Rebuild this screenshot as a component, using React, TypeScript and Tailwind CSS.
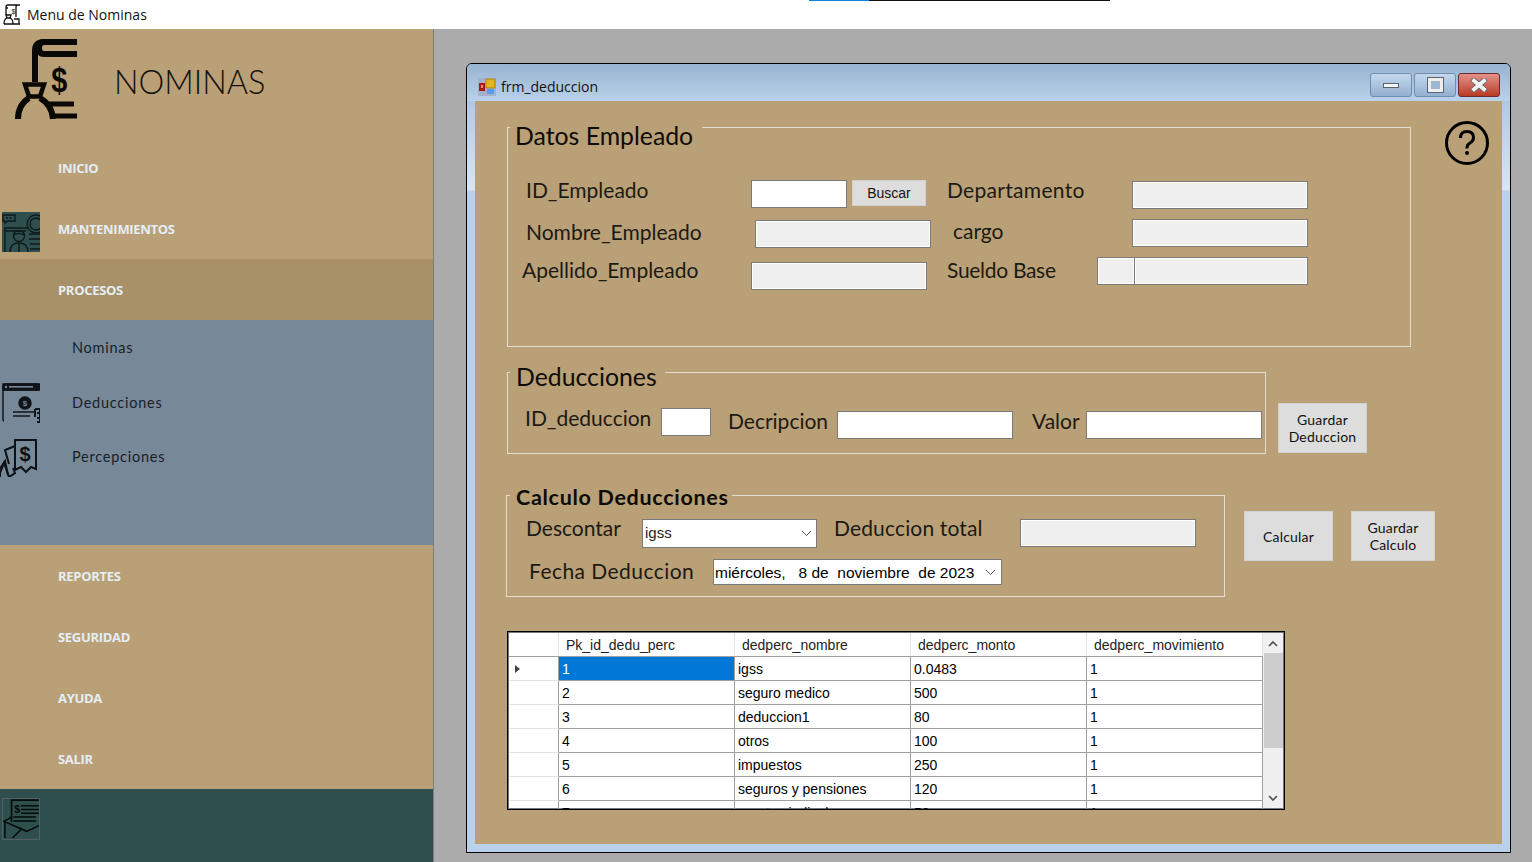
import React from "react";

const GOTHIC = "font-['Lato'] font-normal text-[#1c1a14]";

function Label({ className, children }: { className: string; children: React.ReactNode }) {
  return <div className={`${GOTHIC} shrink-0 text-[21px] leading-[22px] h-[24px] whitespace-nowrap ${className}`}>{children}</div>;
}

function Field({ className, disabled }: { className: string; disabled?: boolean }) {
  return (
    <div className={`shrink-0 h-[28px] border border-[#7a7a7a] ${disabled ? "bg-[#efefef] shadow-[inset_0_0_0_1px_#ffffff]" : "bg-white"} ${className}`} />
  );
}

function WinButton({ className, children }: { className: string; children: React.ReactNode }) {
  return (
    <button className={`shrink-0 bg-[#dddddd] border border-[#d0d0d0] text-[14px] leading-[17px] text-[#111] tracking-[0.2px] font-['Lato'] ${className}`}>
      {children}
    </button>
  );
}

function GroupTitle({ className, children }: { className: string; children: React.ReactNode }) {
  return <div className={`absolute bg-[#baa076] whitespace-nowrap text-[#0d0c08] font-['Lato'] ${className}`}>{children}</div>;
}

function Logo() {
  return (
    <svg width="90" height="95" viewBox="0 0 90 95" className="ml-0 mt-px block" fill="none" stroke="#0a0805">
      <path d="M77 12H44q-9 0-9 9V52" strokeWidth="6" />
      <path d="M44 12q-5 0-5 6t5 6H77" strokeWidth="6" />
      <path d="M25 54.5H44L40 66.5H29Z" strokeWidth="4.5" />
      <path d="M18 89q0-14 11-21M40 68q12 7 13 21" strokeWidth="6" />
      <path d="M47 74H74M52 86H77" strokeWidth="5" />
      <text x="74" y="62" textAnchor="middle" fontSize="36" fontWeight="700" fontFamily="'Liberation Sans', sans-serif" fill="#0a0805" stroke="none" transform="scale(0.8 1)">$</text>
    </svg>
  );
}

function TitleIcon() {
  return (
    <svg width="18" height="21" viewBox="0 0 18 21" fill="none" stroke="#111" strokeWidth="1.3" className="ml-[3px] -mt-[1px] shrink-0">
      <path d="M5 1H17M5 1q-2 0-2 2v8M15 1q-2 0-2 2V13M5 4H3" />
      <path d="M3 11H8L7 14H4Z" />
      <path d="M1 20q0-5 3-6M7 14q3 1 3 6M1 20H17M11 15H16V20" />
      <text x="8.5" y="10" fontSize="7" fontFamily="'Liberation Sans', sans-serif" fill="#111" stroke="none">$</text>
    </svg>
  );
}

function MantIcon() {
  return (
    <svg width="38" height="40" viewBox="0 0 38 40" className="shrink-0 bg-[#2f4f4f]" fill="none" stroke="#0d1a1a" strokeWidth="1.4">
      <path d="M1 3H13V9H6L3 11V9H1Z" />
      <path d="M4 6H10" strokeDasharray="2 1.5" />
      <circle cx="34" cy="12" r="9" />
      <circle cx="34" cy="12" r="6" />
      <path d="M3 40V16H26M3 19H24" />
      <circle cx="17" cy="24" r="5.5" />
      <path d="M12 23q5-3 10 0" />
      <path d="M8 40q0-9 9-9t9 9M17 31V40" />
      <path d="M27 22H38M27 27H38M28 32H38M28 37H38" />
    </svg>
  );
}

function DedIcon() {
  return (
    <svg width="38" height="40" viewBox="0 0 38 40" className="shrink-0 -mt-[1px]" fill="none" stroke="#10141a" strokeWidth="1.5">
      <path d="M2 38q-1 0-1-2V4q0-3 3-3H36V7H1" fill="none" />
      <rect x="1" y="1" width="37" height="6" fill="#10141a" />
      <rect x="7" y="3" width="24" height="1.6" fill="#778899" stroke="none" />
      <circle cx="4" cy="4" r="1.2" fill="#778899" stroke="none" />
      <circle cx="23" cy="20" r="6" fill="#10141a" />
      <text x="23" y="23" textAnchor="middle" fontSize="8" fontWeight="700" fontFamily="'Liberation Sans', sans-serif" fill="#778899" stroke="none">$</text>
      <path d="M11 29H32M11 33H28" strokeWidth="1.5" />
      <path d="M33 26H38V40M33 26V34" strokeWidth="2" />
      <path d="M35 30h3M35 35h3M35 39h3" strokeWidth="2" />
    </svg>
  );
}

function PercIcon() {
  return (
    <svg width="38" height="40" viewBox="0 0 38 40" fill="none" stroke="#0d1014" strokeWidth="2" className="shrink-0">
      <path d="M15 3H36V32L31 30L26 35L21 30L15 33Z" />
      <text x="25" y="24" textAnchor="middle" fontSize="20" fontWeight="700" fontFamily="'Liberation Sans', sans-serif" fill="#0d1014" stroke="none">$</text>
      <path d="M15 9L5 13L9 27M13 31L15 36L9 40L4 26L0 36V40" />
      <path d="M0 32L5 24L8 38" />
    </svg>
  );
}

function FootIcon() {
  return (
    <svg width="38" height="42" viewBox="0 0 38 42" className="shrink-0 border border-[#555f5f]" fill="none" stroke="#050a0a" strokeWidth="1.4">
      <path d="M9 24V1H38" strokeWidth="1.8" />
      <text x="12" y="15" fontSize="11" fontWeight="700" fontFamily="'Liberation Sans', sans-serif" fill="#050a0a" stroke="none">$</text>
      <path d="M19 7H38M19 11H38M19 15H38M11 19H35M11 23H35" strokeWidth="1.6" />
      <path d="M2 41V23L9 19M0 23L25 34L38 28M10 41L20 31" strokeWidth="1.6" />
    </svg>
  );
}

function HelpIcon() {
  return (
    <svg width="44" height="44" viewBox="0 0 44 44" fill="none" stroke="#000" className="shrink-0 -mt-[6px] ml-[34px]">
      <circle cx="22" cy="22" r="20.5" strokeWidth="3" />
      <path d="M15.5 17q0-6.5 6.5-6.5t6.5 6q0 3.5-3.5 5.5t-3 5.5" strokeWidth="3" />
      <circle cx="22" cy="32" r="2" fill="#000" stroke="none" />
    </svg>
  );
}

function AppIcon() {
  return (
    <svg width="18" height="18" viewBox="0 0 18 18" className="shrink-0">
      <rect x="0" y="0" width="18" height="18" fill="#9fb4cc" />
      <rect x="1" y="5" width="6" height="8" fill="#a61c10" />
      <rect x="3" y="7" width="2" height="3" fill="#f08a7a" />
      <rect x="8" y="1" width="9" height="9" fill="#e4b51c" stroke="#a77c0c" strokeWidth="0.8" />
      <rect x="9" y="11" width="7" height="5" fill="#5c9ae6" />
    </svg>
  );
}

function CtrlBtn({ className, children }: { className: string; children: React.ReactNode }) {
  return <div className={`w-[42px] h-[24px] rounded-[3px] flex items-center justify-center border shrink-0 ${className}`}>{children}</div>;
}

function NavItem({ label, icon }: { label: string; icon?: React.ReactNode }) {
  return (
    <div className="h-[61px] pt-[2px] flex items-center relative">
      <div className="w-[58px] pl-[2px] pt-[4px] shrink-0">{icon}</div>
      <span className="font-['Open_Sans'] font-bold text-[13px] tracking-[-0.3px] text-[#e4eef6]">{label}</span>
    </div>
  );
}

function SubItem({ label, icon, className }: { label: string; icon?: React.ReactNode; className: string }) {
  return (
    <div className={`flex items-center ${className}`}>
      <div className="w-[72px] shrink-0">{icon}</div>
      <span className="font-['Lato'] text-[14.5px] text-[#1b2028] tracking-[0.75px]">{label}</span>
    </div>
  );
}

const COLS = ["w-[176px]", "w-[176px]", "w-[176px]", "w-[176px]"];
const HEAD = ["Pk_id_dedu_perc", "dedperc_nombre", "dedperc_monto", "dedperc_movimiento"];
const ROWS = [
  ["1", "igss", "0.0483", "1"],
  ["2", "seguro medico", "500", "1"],
  ["3", "deduccion1", "80", "1"],
  ["4", "otros", "100", "1"],
  ["5", "impuestos", "250", "1"],
  ["6", "seguros y pensiones", "120", "1"],
  ["7", "aporte sindical", "50", "1"],
];

function Grid() {
  return (
    <div className="mt-[34px] w-[778px] h-[179px] border border-black p-px shadow-[inset_0_0_0_1px_#777777] bg-white flex overflow-hidden font-['Liberation_Sans'] text-[14px] text-black">
      <div className="w-[754px] shrink-0">
        <div className="flex h-[24px] border-b border-[#a0a0a0]">
          <div className="w-[50px] border-r border-[#e4e4e4] shrink-0" />
          {HEAD.map((h, i) => (
            <div key={h} className={`${COLS[i]} pl-[7px] leading-[25px] border-r border-[#e4e4e4] shrink-0 text-[#222]`}>{h}</div>
          ))}
        </div>
        {ROWS.map((r, ri) => (
          <div key={r[0]} className="flex h-[24px]">
            <div className="w-[50px] border-r border-b border-r-[#a0a0a0] border-b-[#e4e4e4] shrink-0 flex items-center pl-[6px]">
              {ri === 0 && <div className="w-0 h-0 border-y-[4px] border-y-transparent border-l-[5px] border-l-[#444]" />}
            </div>
            {r.map((c, i) => (
              <div
                key={i}
                className={`${COLS[i]} pl-[3px] leading-[25px] border-r border-b border-[#a0a0a0] shrink-0 whitespace-nowrap ${ri === 0 && i === 0 ? "bg-[#0078d7] text-white" : ""}`}
              >
                {c}
              </div>
            ))}
          </div>
        ))}
      </div>
      <div className="w-[20px] bg-[#f0f0f0] flex flex-col items-center shrink-0">
        <div className="h-[20px] flex items-center justify-center">
          <svg width="10" height="7" viewBox="0 0 10 7" fill="none" stroke="#555" strokeWidth="1.7"><path d="M1 6L5 2L9 6" /></svg>
        </div>
        <div className="w-[19px] h-[95px] bg-[#cdcdcd]" />
        <div className="flex-1" />
        <div className="h-[20px] flex items-center justify-center">
          <svg width="10" height="7" viewBox="0 0 10 7" fill="none" stroke="#555" strokeWidth="1.7"><path d="M1 1L5 5L9 1" /></svg>
        </div>
      </div>
    </div>
  );
}

function Caret() {
  return (
    <svg width="11" height="7" viewBox="0 0 11 7" fill="none" stroke="#555" strokeWidth="1" className="shrink-0"><path d="M1 1L5.5 5.5L10 1" /></svg>
  );
}

export default function App() {
  return (
    <div className="w-[1532px] h-[862px] overflow-hidden flex flex-col bg-[#ababab] relative">
      <div className="h-[29px] bg-white flex items-center shrink-0">
        <TitleIcon />
        <span className="ml-[6px] font-['Open_Sans'] text-[14px] text-[#111]">Menu de Nominas</span>
      </div>
      <div className="absolute top-0 left-[809px] w-[60px] h-[1px] bg-[#0a84e0]" />
      <div className="absolute top-0 left-[869px] w-[241px] h-[1px] bg-[#111]" />

      <div className="flex flex-1 min-h-0">
        <aside className="w-[434px] shrink-0 border-r border-[#7d7d7d] bg-[#baa076] flex flex-col">
          <div className="h-[108px] flex shrink-0">
            <Logo />
            <div className="ml-[24px] mt-[31px] font-['Lato'] font-light text-[32.5px] leading-[44px] text-[#12100c]">NOMINAS</div>
          </div>
          <NavItem label="INICIO" />
          <NavItem label="MANTENIMIENTOS" icon={<MantIcon />} />
          <div className="bg-[#a89068]"><NavItem label="PROCESOS" /></div>
          <div className="h-[225px] bg-[#778899] flex flex-col shrink-0">
            <SubItem label="Nominas" className="h-[56px]" />
            <SubItem label="Deducciones" className="h-[54px] pl-[2px] [&>div]:w-[70px]" icon={<DedIcon />} />
            <SubItem label="Percepciones" className="h-[54px]" icon={<PercIcon />} />
          </div>
          <NavItem label="REPORTES" />
          <NavItem label="SEGURIDAD" />
          <NavItem label="AYUDA" />
          <NavItem label="SALIR" />
          <div className="flex-1 bg-[#2f4f4f] pt-[9px] pl-[2px]"><FootIcon /></div>
        </aside>

        <main className="flex-1 pl-[32px] pt-[34px]">
          <div className="w-[1045px] h-[790px] border border-black rounded-t-[6px] bg-[linear-gradient(180deg,#b0c9e3_37px,#d8e6f4_126px,#b9d1ea_127px)] flex flex-col overflow-hidden">
            <div className="h-[37px] shrink-0 bg-gradient-to-b from-[#99b4d1] to-[#b9d1ea] flex items-center pl-[11px] pr-[10px] pt-[8px]">
              <AppIcon />
              <span className="ml-[5px] font-['Open_Sans'] text-[14px] text-[#111]">frm_deduccion</span>
              <div className="flex-1" />
              <div className="flex gap-[2px] -mt-[3px]">
                <CtrlBtn className="border-[#6f8db0] bg-gradient-to-b from-[#c3d8ee] to-[#94b0cf]">
                  <div className="w-[16px] h-[5px] bg-[#f4f4f4] border border-[#5a6470]" />
                </CtrlBtn>
                <CtrlBtn className="border-[#6f8db0] bg-gradient-to-b from-[#c3d8ee] to-[#94b0cf]">
                  <div className="w-[15px] h-[14px] bg-[#9db6d2] border-[3px] border-[#eeeeee] outline outline-1 outline-[#5a6470]" />
                </CtrlBtn>
                <CtrlBtn className="border-[#6b2a30] bg-gradient-to-b from-[#e4908a] to-[#b83a22]">
                  <svg width="18" height="14" viewBox="0 0 18 14" fill="none">
                    <path d="M2 1L16 13M16 1L2 13" stroke="#5a5a66" strokeWidth="5.5" />
                    <path d="M2.5 1.5L15.5 12.5M15.5 1.5L2.5 12.5" stroke="#f2f2f2" strokeWidth="4" />
                  </svg>
                </CtrlBtn>
              </div>
            </div>

            <div className="mx-[8px] h-[743px] bg-[#baa076] pl-[32px] pt-[26px] shrink-0">
              <div className="flex">
                <div className="relative w-[904px] h-[220px] border border-[#e4ddcf] pt-[51px] shrink-0">
                  <GroupTitle className="left-[2px] -top-[7px] w-[192px] h-[30px] pl-[5px] text-[24.8px] leading-[30px]">Datos Empleado</GroupTitle>
                  <div className="flex h-[40px] pl-[18px]">
                    <Label className="w-[225px]">ID_Empleado</Label>
                    <Field className="w-[96px] mt-px" />
                    <WinButton className="ml-[5px] w-[74px] h-[26px] mt-px !font-['Liberation_Sans'] !tracking-normal">Buscar</WinButton>
                    <Label className="ml-[21px] w-[185px] tracking-[0.3px]">Departamento</Label>
                    <Field className="w-[176px] mt-[2px]" disabled />
                  </div>
                  <div className="flex h-[38px] pl-[18px]">
                    <Label className="w-[229px] mt-[2px]">Nombre_Empleado</Label>
                    <Field className="w-[176px] mt-px" disabled />
                    <Label className="ml-[22px] w-[179px] mt-px">cargo</Label>
                    <Field className="w-[176px]" disabled />
                  </div>
                  <div className="flex pl-[14px]">
                    <Label className="w-[229px] mt-[2px]">Apellido_Empleado</Label>
                    <Field className="w-[176px] mt-[5px]" disabled />
                    <Label className="ml-[20px] w-[150px] mt-[2px] tracking-[-0.3px]">Sueldo Base</Label>
                    <Field className="w-[38px]" disabled />
                    <Field className="w-[174px] -ml-px" disabled />
                  </div>
                </div>
                <HelpIcon />
              </div>

              <div className="flex mt-[25px]">
                <div className="relative w-[759px] h-[82px] border border-[#e4ddcf] pt-[34px] pl-[17px] flex shrink-0">
                  <GroupTitle className="left-[2px] -top-[11px] w-[155px] h-[30px] pl-[6px] text-[24.8px] leading-[30px]">Deducciones</GroupTitle>
                  <Label className="w-[136px]">ID_deduccion</Label>
                  <Field className="w-[50px] mt-px" />
                  <Label className="ml-[17px] w-[109px] mt-[3px]">Decripcion</Label>
                  <Field className="w-[176px] mt-[4px]" />
                  <Label className="ml-[19px] w-[54px] mt-[3px]">Valor</Label>
                  <Field className="w-[176px] mt-[4px]" />
                </div>
                <WinButton className="ml-[12px] mt-[31px] w-[89px] h-[50px]">Guardar<br />Deduccion</WinButton>
              </div>

              <div className="flex mt-[41px] -ml-px">
                <div className="relative w-[719px] h-[102px] border border-[#e4ddcf] pt-[21px] pl-[19px] shrink-0">
                  <GroupTitle className="left-[3px] -top-[12px] w-[222px] h-[26px] pl-[6px] font-bold text-[21.5px] tracking-[0.7px] leading-[26px]">Calculo Deducciones</GroupTitle>
                  <div className="flex h-[42px]">
                    <Label className="w-[116px]">Descontar</Label>
                    <div className="w-[175px] h-[29px] mt-[2px] bg-white border border-[#7a7a7a] flex items-center justify-between pl-[2px] pr-[4px] shrink-0 font-['Liberation_Sans'] text-[15px] text-[#222]">
                      <span>igss</span><Caret />
                    </div>
                    <Label className="ml-[17px] w-[186px] tracking-[0.15px]">Deduccion total</Label>
                    <Field className="w-[176px] mt-[2px]" disabled />
                  </div>
                  <div className="flex pl-[3px]">
                    <Label className="w-[184px] mt-px tracking-[0.45px]">Fecha Deduccion</Label>
                    <div className="w-[289px] h-[26px] bg-white border border-[#7a7a7a] flex items-center justify-between pl-[1px] pr-[5px] pt-px shrink-0 font-['Liberation_Sans'] text-[15.5px] text-black whitespace-pre">
                      <span>miércoles,   8 de  noviembre  de 2023</span><Caret />
                    </div>
                  </div>
                </div>
                <WinButton className="ml-[19px] mt-[16px] w-[89px] h-[50px]">Calcular</WinButton>
                <WinButton className="ml-[18px] mt-[16px] w-[84px] h-[50px]">Guardar<br />Calculo</WinButton>
              </div>

              <Grid />
            </div>
          </div>
        </main>
      </div>
    </div>
  );
}
